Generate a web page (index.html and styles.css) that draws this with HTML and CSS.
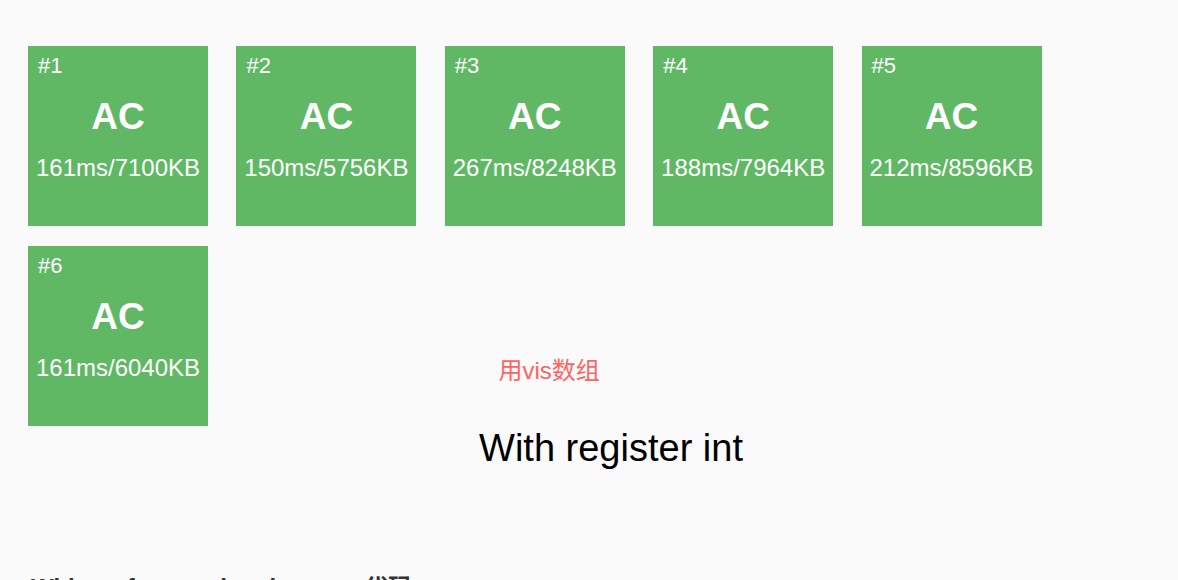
FILE: index.html
```html
<!DOCTYPE html>
<html lang="zh">
<head>
<meta charset="utf-8">
<title>Submission results</title>
<link rel="stylesheet" href="styles.css">
</head>
<body>
<main class="page">
  <section class="results">
    <div class="case"><span class="case-id">#1</span><span class="case-status">AC</span><span class="case-stat">161ms/7100KB</span></div>
    <div class="case"><span class="case-id">#2</span><span class="case-status">AC</span><span class="case-stat">150ms/5756KB</span></div>
    <div class="case"><span class="case-id">#3</span><span class="case-status">AC</span><span class="case-stat">267ms/8248KB</span></div>
    <div class="case"><span class="case-id">#4</span><span class="case-status">AC</span><span class="case-stat">188ms/7964KB</span></div>
    <div class="case"><span class="case-id">#5</span><span class="case-status">AC</span><span class="case-stat">212ms/8596KB</span></div>
    <div class="case"><span class="case-id">#6</span><span class="case-status">AC</span><span class="case-stat">161ms/6040KB</span></div>
    <p class="note">用vis数组</p>
  </section>
  <h2 class="title">With register int</h2>
  <h3 class="next">Without fast read and output 代码</h3>
</main>
</body>
</html>
```
FILE: styles.css
```css
html, body {
  margin: 0;
  padding: 0;
  background: #fafafa;
}

body {
  font-family: "Liberation Sans", "Noto Sans CJK SC", Arial, sans-serif;
  color: #000;
  overflow: hidden;
  height: 580px;
}

.page {
  padding: 46px 0 0 28px;
}

.results {
  display: flex;
  flex-wrap: wrap;
  column-gap: 28.4px;
  row-gap: 20px;
}

.case {
  width: 180px;
  height: 180px;
  background: #60b865;
  color: #fff;
  display: flex;
  flex-direction: column;
  box-sizing: border-box;
  padding-top: 9px;
}

.case-id {
  font-size: 22px;
  line-height: 22px;
  padding-left: 10px;
}

.case-status {
  margin-top: 21px;
  font-size: 37px;
  line-height: 37px;
  font-weight: bold;
  text-align: center;
}

.case-stat {
  margin-top: 21.4px;
  font-size: 24px;
  line-height: 24px;
  text-align: center;
  white-space: nowrap;
}

.note {
  flex: 1 1 0;
  min-width: 0;
  margin: 0;
  padding: 113px 316px 0 0;
  font-size: 24px;
  line-height: 24px;
  color: #ff6363;
  text-align: center;
  white-space: nowrap;
}

.title {
  margin: 2.8px 0 0 16px;
  font-size: 38px;
  line-height: 38px;
  font-weight: normal;
  text-align: center;
}

.next {
  margin: 109px 0 0 3px;
  font-size: 24px;
  line-height: 24px;
  font-weight: bold;
  color: #333;
}
```
